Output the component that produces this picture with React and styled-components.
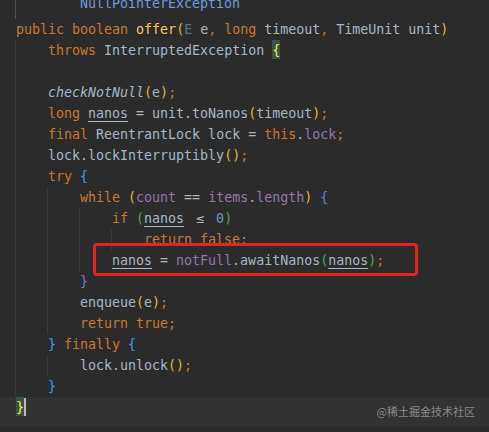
import React from "react";
import styled, { createGlobalStyle } from "styled-components";

const GlobalStyle = createGlobalStyle`
  html, body {
    margin: 0;
    padding: 0;
    background: #2b2b2b;
  }
`;

const colors = {
  p: "#a9b7c6",
  k: "#cc7832",
  f: "#9876aa",
  n: "#6897bb",
  d: "#ffc66d",
  t: "#507874",
  y: "#e8ba36",
  g: "#54a857",
  b: "#359ff4",
  v: "#6e7ed9",
  c: "#6d9cde",
  u: "#a9b7c6",
  i: "#a9b7c6",
  m: "#ffef28",
};

const lines = [
  { units: 2, guides: [0], first: true, tokens: [["c", "NullPointerException"]] },
  { units: 0, tokens: [["k", "public "], ["k", "boolean "], ["d", "offer"], ["y", "("], ["t", "E "], ["p", "e"], ["k", ", "], ["k", "long "], ["p", "timeout"], ["k", ", "], ["p", "TimeUnit unit"], ["y", ")"]] },
  { units: 1, guides: [0], tokens: [["k", "throws "], ["p", "InterruptedException "], ["m", "{"]] },
  { units: 1, guides: [0], tokens: [] },
  { units: 1, guides: [0], tokens: [["i", "checkNotNull"], ["y", "("], ["p", "e"], ["y", ")"], ["k", ";"]] },
  { units: 1, guides: [0], tokens: [["k", "long "], ["u", "nanos"], ["p", " = unit.toNanos"], ["y", "("], ["p", "timeout"], ["y", ")"], ["k", ";"]] },
  { units: 1, guides: [0], tokens: [["k", "final "], ["p", "ReentrantLock lock = "], ["k", "this"], ["p", "."], ["f", "lock"], ["k", ";"]] },
  { units: 1, guides: [0], tokens: [["p", "lock.lockInterruptibly"], ["y", "()"], ["k", ";"]] },
  { units: 1, guides: [0], tokens: [["k", "try "], ["b", "{"]] },
  { units: 2, guides: [0, 1], tokens: [["k", "while "], ["y", "("], ["f", "count"], ["p", " == "], ["f", "items"], ["p", "."], ["f", "length"], ["y", ")"], ["p", " "], ["v", "{"]] },
  { units: 3, guides: [0, 1, 2], tokens: [["k", "if "], ["g", "("], ["u", "nanos"], ["p", " "], ["l", "≤"], ["p", " "], ["n", "0"], ["g", ")"]] },
  { units: 4, guides: [0, 1, 2, 3], tokens: [["k", "return false;"]] },
  { units: 3, guides: [0, 1, 2], tokens: [["u", "nanos"], ["p", " = "], ["f", "notFull"], ["p", ".awaitNanos"], ["g", "("], ["u", "nanos"], ["g", ")"], ["k", ";"]] },
  { units: 2, guides: [0, 1], tokens: [["v", "}"]] },
  { units: 2, guides: [0, 1], tokens: [["p", "enqueue"], ["y", "("], ["p", "e"], ["y", ")"], ["k", ";"]] },
  { units: 2, guides: [0, 1], tokens: [["k", "return true;"]] },
  { units: 1, guides: [0], tokens: [["b", "}"], ["p", " "], ["k", "finally "], ["b", "{"]] },
  { units: 2, guides: [0, 1], tokens: [["p", "lock.unlock"], ["y", "()"], ["k", ";"]] },
  { units: 1, guides: [0], tokens: [["b", "}"]] },
];

function App() {
  return (
    <>
      <GlobalStyle />
      <Editor>
        <Code>
          {lines.map((line, index) => (
            <Row key={`ln-${index}`} $first={line.first}>
              {Array.from({ length: line.units }).map((_, u) => (
                <Indent
                  key={`in-${u}`}
                  $guide={(line.guides || []).includes(u)}
                  $green={line.first}
                />
              ))}
              {line.tokens.map(([type, text], t) =>
                type === "l" ? (
                  <Ligature key={`tk-${t}`}>{text}</Ligature>
                ) : (
                  <Token key={`tk-${t}`} $t={type}>
                    {text}
                  </Token>
                )
              )}
            </Row>
          ))}
          <CurrentRow>
            <Token $t="m">{"}"}</Token>
            <Caret />
          </CurrentRow>
        </Code>
        <Mark />
        <Watermark>@稀土掘金技术社区</Watermark>
      </Editor>
    </>
  );
}

const Editor = styled.div`
  position: relative;
  width: 489px;
  height: 432px;
  overflow: hidden;
  background: #2b2b2b;
  font-family: "DejaVu Sans Mono", "Liberation Mono", monospace;
  font-size: 13.3px;
`;

const Code = styled.div`
  display: flex;
  flex-direction: column;
  margin-top: -2px;
`;

const Row = styled.div`
  display: flex;
  align-items: stretch;
  height: 21px;
  line-height: ${(props) => (props.$first ? "11px" : "21px")};
  padding-left: 16px;
  white-space: pre;
`;

const CurrentRow = styled(Row)`
  height: 29px;
  align-items: flex-start;
  background: #323232;
`;

const Indent = styled.span`
  flex: none;
  width: 32px;
  margin-left: -1px;
  border-left: 1px solid
    ${(props) => {
      if (!props.$guide) return "transparent";
      return props.$green ? "#4a5d3e" : "#3b3b3b";
    }};
`;

const Token = styled.span`
  color: ${(props) => colors[props.$t]};
  font-style: ${(props) => (props.$t === "i" ? "italic" : "normal")};
  text-decoration: ${(props) => (props.$t === "u" ? "underline" : "none")};
  text-underline-offset: 3px;
  background: ${(props) => (props.$t === "m" ? "#3b514d" : "transparent")};
  height: ${(props) => (props.$t === "m" ? "19px" : "auto")};
  line-height: inherit;
`;

const Ligature = styled.span`
  display: inline-block;
  width: 16px;
  text-align: center;
  color: #a9b7c6;
`;

const Caret = styled.span`
  width: 2px;
  height: 18px;
  margin-top: 1px;
  background: #bbbbbb;
`;

const Mark = styled.div`
  position: absolute;
  left: 93px;
  top: 243px;
  width: 325px;
  height: 33px;
  box-sizing: border-box;
  border: 3px solid #e3241f;
  border-radius: 4px;
`;

const Watermark = styled.div`
  position: absolute;
  right: 14px;
  top: 402px;
  font-family: "Noto Sans CJK SC", "Noto Sans", sans-serif;
  font-size: 11px;
  line-height: 18px;
  color: #8a8a8a;
`;

export default App;
